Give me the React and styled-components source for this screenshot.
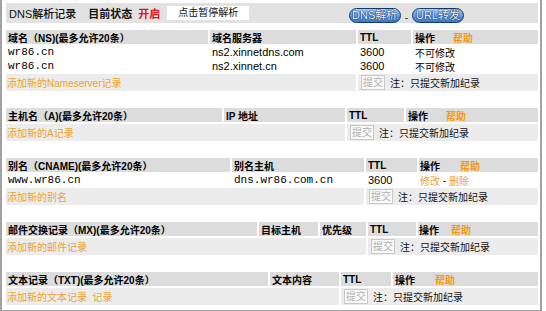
import React from "react";
import styled, { createGlobalStyle } from "styled-components";

const Global = createGlobalStyle`
  html, body { margin: 0; padding: 0; background: #fff; }
  body {
    font-family: "Liberation Sans", "Noto Sans CJK SC", sans-serif;
    font-size: 11px;
    color: #000;
  }
`;

const Frame = styled.div`
  width: 532px;
  border: 2px solid #a2a2a2;
  border-top: none;
  padding: 3px 2px 5px 4px;
`;

const TitleBar = styled.div`
  height: 20px;
  background: #e2e2e2;
  display: flex;
  align-items: center;
  padding-left: 3px;
  font-size: 11px;
`;

const TitleText = styled.span`
  font-weight: ${(p) => (p.$bold ? 700 : 500)};
  color: ${(p) => p.$color || "#111"};
  margin-left: ${(p) => p.$ml || 0}px;
`;

const PauseBox = styled.div`
  margin-left: 7px;
  width: 82px;
  height: 14px;
  background: #fff;
  font-size: 10px;
  line-height: 14px;
  text-align: center;
  color: #111;
`;

const NavGroup = styled.div`
  margin-left: auto;
  margin-right: 74px;
  display: flex;
  align-items: flex-end;
  gap: 4px;
  padding-top: 4px;
`;

const PillButton = styled.div`
  width: ${(p) => p.$w}px;
  height: 15px;
  box-sizing: border-box;
  border: 1.5px solid #163869;
  border-radius: 8px;
  background: linear-gradient(#a6cff5, #5d98dd 55%, #3a78c9);
  color: #eef6ff;
  font-size: 11px;
  line-height: 12px;
  text-align: center;
  text-shadow: 0 0 1px #0e2c5c, 0 0 1px #0e2c5c, 0 0 1px #0e2c5c;
`;

const Dash = styled.span`
  font-size: 10px;
  line-height: 10px;
  color: #222;
`;

const Section = styled.div`
  display: grid;
  grid-template-columns: ${(p) => p.$cols};
  column-gap: 2px;
  row-gap: 2px;
  margin-top: ${(p) => p.$mt}px;
`;

const HeadCell = styled.div`
  height: 14px;
  background: #dcdcdc;
  display: flex;
  align-items: center;
  padding-left: ${(p) => p.$pl ?? 2}px;
  font-size: 10px;
  font-weight: 700;
  white-space: nowrap;
  overflow: hidden;
`;

const Help = styled.span`
  color: #f39a12;
  margin-left: ${(p) => p.$ml}px;
`;

const DataCell = styled.div`
  height: 12px;
  display: flex;
  align-items: center;
  padding-left: ${(p) => p.$pl ?? 2}px;
  white-space: nowrap;
  font-family: ${(p) =>
    p.$mono
      ? '"Liberation Mono", "Noto Sans CJK SC", monospace'
      : '"Liberation Sans", "Noto Sans CJK SC", sans-serif'};
  font-size: ${(p) => (p.$cjk ? 10 : 11)}px;
`;

const Orange = styled.span`
  color: #eda22a;
`;

const AddCell = styled.div`
  grid-column: span ${(p) => p.$span};
  height: 17px;
  background: #ececec;
  display: flex;
  align-items: center;
  padding-left: ${(p) => p.$pl ?? 1}px;
  font-size: 10px;
  color: #eda22a;
  white-space: pre;
`;

const SubmitBtn = styled.div`
  width: 24px;
  height: 15px;
  box-sizing: border-box;
  border: 1px solid #c8c8c8;
  background: #fafafa;
  color: #b0b0b0;
  font-size: 10px;
  line-height: 13px;
  text-align: center;
  margin-right: 5px;
`;

const Note = styled.span`
  color: #111;
  font-size: 10px;
`;

function Head({ cols, help, pad }) {
  return (
    <>
      {cols.map((c, i) => (
        <HeadCell key={i} $pl={pad && pad[i]}>
          {c}
        </HeadCell>
      ))}
      <HeadCell $pl={pad && pad[cols.length]}>
        操作
        <Help $ml={help}>帮助</Help>
      </HeadCell>
    </>
  );
}

function AddRow({ label, leftSpan, rightSpan }) {
  return (
    <>
      <AddCell $span={leftSpan}>{label}</AddCell>
      <AddCell $span={rightSpan} $pl={3}>
        <SubmitBtn>提交</SubmitBtn>
        <Note>注：只提交新加纪录</Note>
      </AddCell>
    </>
  );
}

export default function App() {
  return (
    <>
      <Global />
      <Frame>
        <TitleBar>
          <TitleText>DNS解析记录</TitleText>
          <TitleText $ml={12} $bold>目前状态</TitleText>
          <TitleText $ml={6} $bold $color="#e0141e">开启</TitleText>
          <PauseBox>点击暂停解析</PauseBox>
          <NavGroup>
            <PillButton $w={52}>DNS解析</PillButton>
            <Dash>-</Dash>
            <PillButton $w={52}>URL转发</PillButton>
          </NavGroup>
        </TitleBar>

        <Section $mt={7} $cols="202px 146px 53px 1fr">
          <Head cols={["域名（NS)(最多允许20条）", "域名服务器", "TTL"]} help={18} />
          <DataCell $mono>wr86.cn</DataCell>
          <DataCell>ns2.xinnetdns.com</DataCell>
          <DataCell>3600</DataCell>
          <DataCell $cjk>不可修改</DataCell>
          <DataCell $mono>wr86.cn</DataCell>
          <DataCell>ns2.xinnet.cn</DataCell>
          <DataCell>3600</DataCell>
          <DataCell $cjk>不可修改</DataCell>
          <AddRow label="添加新的Nameserver记录" leftSpan={2} rightSpan={2} />
        </Section>

        <Section $mt={17} $cols="216px 121px 57px 1fr">
          <Head cols={["主机名（A)(最多允许20条）", "IP 地址", "TTL"]} help={18} />
          <AddRow label="添加新的A记录" leftSpan={2} rightSpan={2} />
        </Section>

        <Section $mt={17} $cols="224px 132px 51px 1fr">
          <Head cols={["别名（CNAME)(最多允许20条）", "别名主机", "TTL"]} help={20} pad={[2, 2, 2, 1]} />
          <DataCell $mono>www.wr86.cn</DataCell>
          <DataCell $mono>dns.wr86.com.cn</DataCell>
          <DataCell>3600</DataCell>
          <DataCell $cjk $pl={1}>
            <Orange>修改</Orange>
            &nbsp;-&nbsp;
            <Orange>删除</Orange>
          </DataCell>
          <AddRow label="添加新的别名" leftSpan={2} rightSpan={2} />
        </Section>

        <Section $mt={17} $cols="251px 59px 46px 48px 1fr">
          <Head cols={["邮件交换记录（MX)(最多允许20条）", "目标主机", "优先级", "TTL"]} help={12} pad={[2, 2, 2, 2, 1]} />
          <AddRow label="添加新的邮件记录" leftSpan={3} rightSpan={2} />
        </Section>

        <Section $mt={17} $cols="262px 69px 50px 1fr">
          <Head cols={["文本记录（TXT)(最多允许20条）", "文本内容", "TTL"]} help={20} />
          <AddRow label="添加新的文本记录  记录" leftSpan={2} rightSpan={2} />
        </Section>
      </Frame>
    </>
  );
}
